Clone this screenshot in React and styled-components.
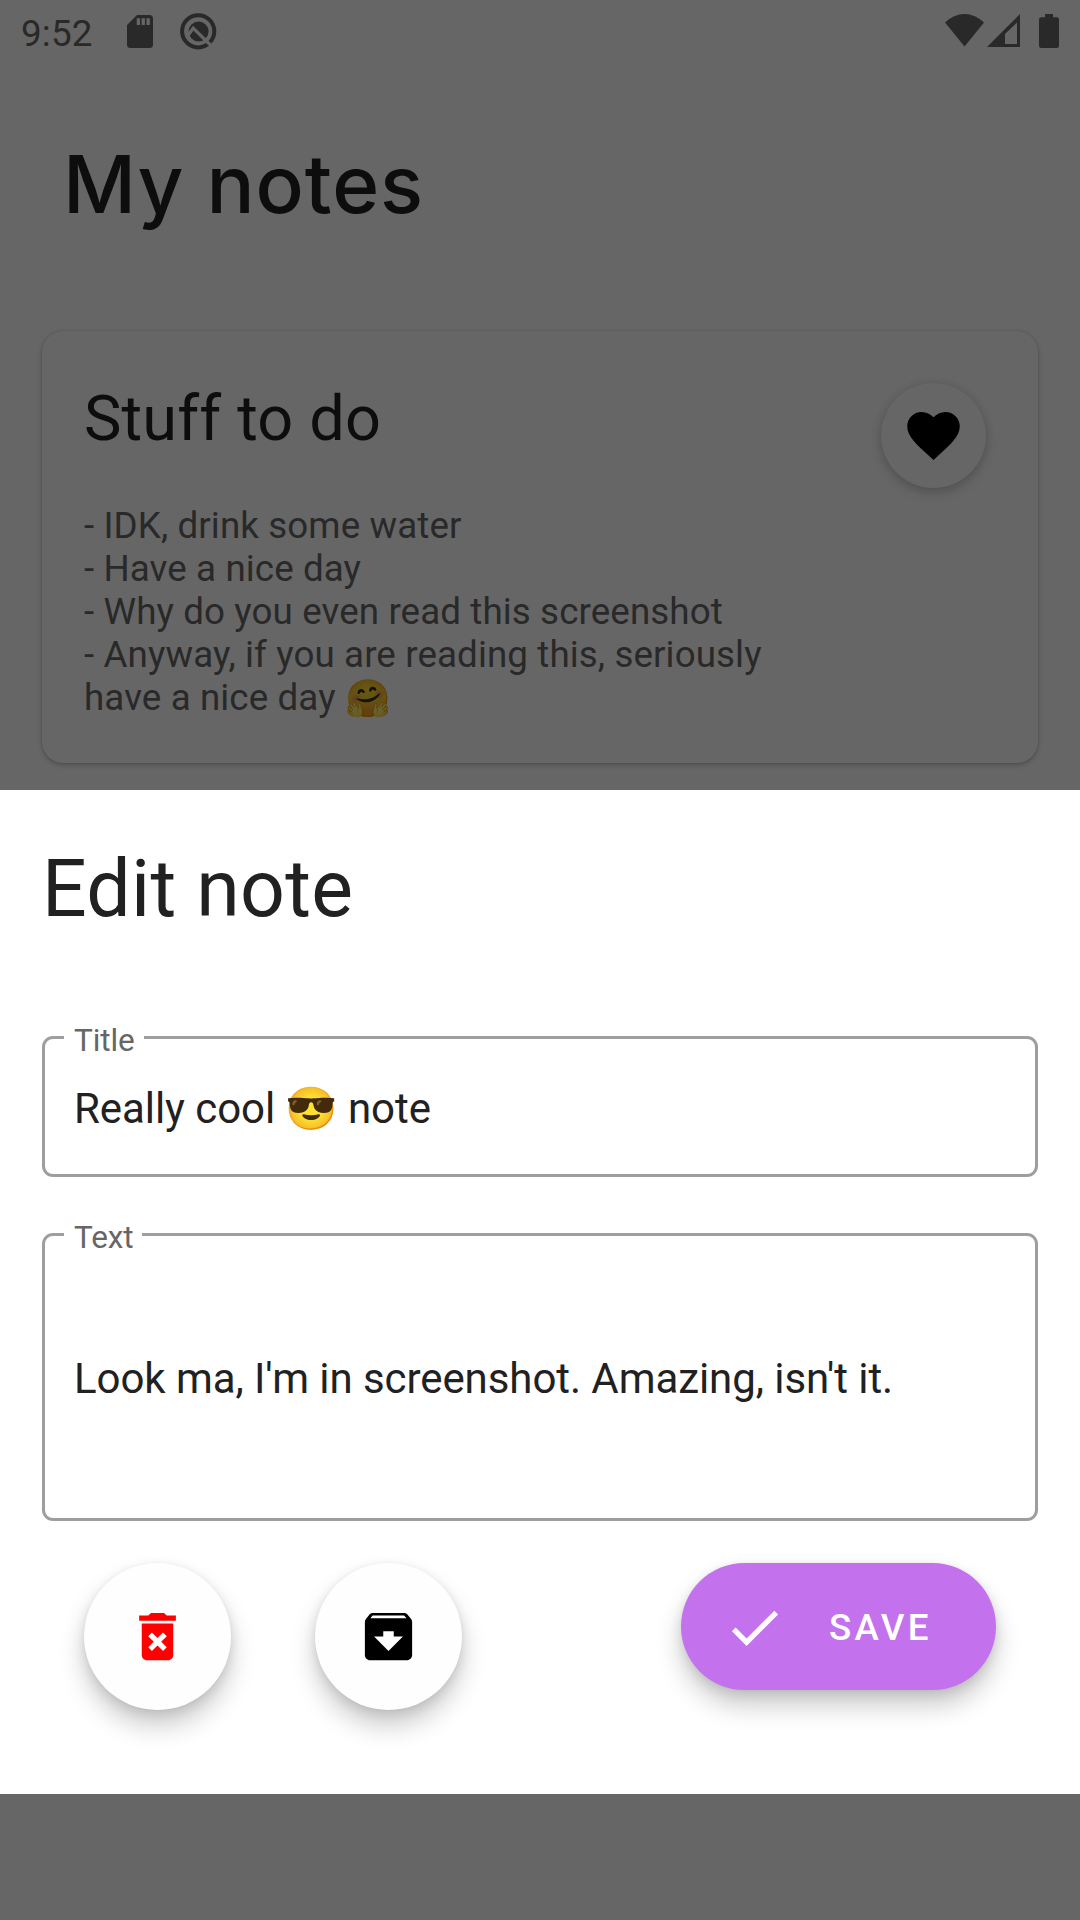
import React from "react";
import styled, { createGlobalStyle } from "styled-components";

const GlobalStyle = createGlobalStyle`
  * { box-sizing: border-box; }
  html, body { margin: 0; padding: 0; background: #666666; }
  body { font-family: Roboto, "Noto Color Emoji", sans-serif; }
`;

const Screen = styled.div`
  width: 1080px;
  height: 1920px;
  overflow: hidden;
  display: flex;
  flex-direction: column;
  background: #666666;
`;

const Backdrop = styled.div`
  height: 790px;
  flex: none;
  display: flex;
  flex-direction: column;
`;

const StatusBar = styled.header`
  height: 63px;
  padding: 0 21px 0 21px;
  display: flex;
  justify-content: space-between;
  color: #292929;
`;

const StatusGroup = styled.div`
  display: flex;
  align-items: flex-start;
`;

const Clock = styled.span`
  width: 106px;
  padding-top: 12px;
  font-size: 36.75px;
  line-height: 43px;
  letter-spacing: 0.2px;
`;

const Glyph = styled.svg`
  display: block;
  flex: none;
  width: ${(p) => p.$w}px;
  height: ${(p) => p.$h}px;
  margin: ${(p) => p.$m || "0"};
  fill: currentColor;
`;

const PageTitle = styled.h1`
  margin: 68px 0 0 63px;
  height: 200px;
  font-family: Inter, sans-serif;
  font-weight: 500;
  font-size: 80px;
  line-height: 106px;
  letter-spacing: 0.9px;
  color: #0d0d0d;
`;

const NoteCard = styled.article`
  margin: 0 42px;
  height: 432px;
  padding: 52px 52px 0 42px;
  border-radius: 21px;
  background: #666666;
  box-shadow: 0 2px 5px rgba(0, 0, 0, 0.22), 0 0 2px rgba(0, 0, 0, 0.12);
  display: flex;
  justify-content: space-between;
  align-items: flex-start;
`;

const NoteContent = styled.div`
  margin-top: -1px;
`;

const NoteTitle = styled.h2`
  margin: 0 0 48px;
  font-weight: 400;
  font-size: 63px;
  line-height: 74px;
  letter-spacing: 0.17px;
  color: #0d0d0d;
`;

const NoteLine = styled.p`
  margin: 0;
  height: 43px;
  display: flex;
  font-size: 36.75px;
  line-height: 43px;
  letter-spacing: 0.1px;
  white-space: pre;
  color: #292929;
`;

const Emoji = styled.span`
  font-family: "Noto Color Emoji", sans-serif;
  padding-top: ${(p) => (p.$dim ? 1 : 0)}px;
  filter: brightness(${(p) => (p.$dim ? 0.4 : 1)});
`;

const HeartButton = styled.button`
  width: 105px;
  height: 105px;
  padding: 0;
  border: 0;
  border-radius: 50%;
  background: #666666;
  color: #000;
  display: grid;
  place-items: center;
  box-shadow: 0 5px 12px rgba(0, 0, 0, 0.16), 0 0 8px rgba(0, 0, 0, 0.08);
`;

const Sheet = styled.section`
  height: 1004px;
  flex: none;
  padding: 53px 42px 0;
  background: #fff;
  display: flex;
  flex-direction: column;
`;

const SheetTitle = styled.h2`
  margin: 0 0 84px;
  font-weight: 400;
  font-size: 78.75px;
  line-height: 92px;
  letter-spacing: 0.27px;
  color: #212121;
`;

const Field = styled.fieldset`
  margin: 0 0 ${(p) => p.$gap}px;
  padding: 0 29px;
  height: ${(p) => p.$h}px;
  border: 3px solid #9e9e9e;
  border-radius: 11px;
  min-width: 0;
`;

const Legend = styled.legend`
  margin-left: -10px;
  padding: 0 10px;
  width: ${(p) => p.$w}px;
  height: 37px;
  font-size: 31.5px;
  line-height: 43px;
  letter-spacing: -0.1px;
  color: #666666;
`;

const FieldValue = styled.div`
  height: ${(p) => p.$top + 50}px;
  padding-top: ${(p) => p.$top}px;
  font-size: 42px;
  line-height: 50px;
  letter-spacing: -0.07px;
  color: #212121;
  white-space: pre;
  display: flex;
`;

const Actions = styled.div`
  display: flex;
  align-items: flex-start;
  padding: 0 42px;
`;

const liftShadow =
  "0 16px 26px rgba(0, 0, 0, 0.2), 0 4px 12px rgba(0, 0, 0, 0.1), 0 0 4px rgba(0, 0, 0, 0.03)";

const Fab = styled.button`
  width: 147px;
  height: 147px;
  margin-right: 84px;
  padding: 0;
  border: 0;
  border-radius: 50%;
  background: #fefefe;
  color: ${(p) => p.$color};
  display: grid;
  place-items: center;
  box-shadow: ${liftShadow};
`;

const SaveButton = styled.button`
  margin-left: auto;
  width: 315px;
  height: 127px;
  padding: 1px 0 0 42px;
  border: 0;
  border-radius: 64px;
  background: #c371ed;
  color: #fff;
  display: flex;
  align-items: center;
  gap: 43px;
  font: 500 36.75px/43px Roboto, sans-serif;
  letter-spacing: 3.28px;
  box-shadow: ${liftShadow};
`;

function Icon({ d }) {
  return (
    <Glyph $w={63} $h={63} viewBox="0 0 24 24">
      <path d={d} />
    </Glyph>
  );
}

const HEART =
  "M12 21.35l-1.45-1.32C5.4 15.36 2 12.28 2 8.5 2 5.42 4.42 3 7.5 3c1.74 0 3.41.81 4.5 2.09C13.09 3.81 14.76 3 16.5 3 19.58 3 22 5.42 22 8.5c0 3.78-3.4 6.86-8.55 11.54L12 21.35z";
const DELETE =
  "M6 19c0 1.1.9 2 2 2h8c1.1 0 2-.9 2-2V7H6v12zm2.46-7.12l1.41-1.41L12 12.59l2.12-2.12 1.41 1.41L13.41 14l2.12 2.12-1.41 1.41L12 15.41l-2.12 2.12-1.41-1.41L10.59 14l-2.13-2.12zM15.5 4l-1-1h-5l-1 1H5v2h14V4z";
const ARCHIVE =
  "M20.54 5.23l-1.39-1.68C18.88 3.21 18.47 3 18 3H6c-.47 0-.88.21-1.16.55L3.46 5.23C3.17 5.57 3 6.02 3 6.5V19c0 1.1.9 2 2 2h14c1.1 0 2-.9 2-2V6.5c0-.48-.17-.93-.46-1.27zM12 17.5L6.5 12H10v-2h4v2h3.5L12 17.5zM5.12 5l.81-1h12l.94 1H5.12z";
const CHECK = "M9 16.17L4.83 12l-1.42 1.41L9 19 21 7l-1.41-1.41z";

const NOTE_LINES = [
  "- IDK, drink some water",
  "- Have a nice day",
  "- Why do you even read this screenshot",
  "- Anyway, if you are reading this, seriously",
];

export default function App() {
  return (
    <Screen>
      <GlobalStyle />
      <Backdrop>
        <StatusBar>
          <StatusGroup>
            <Clock>9:52</Clock>
            <Glyph $w={26} $h={33} $m="15px 0 0" viewBox="0 0 26 33">
              <path
                fillRule="evenodd"
                d="M10 0H22.500Q26 0 26 3.500V29.500Q26 33 22.500 33H3.500Q0 33 0 29.500V10ZM9.700 3.300V10H13V3.300ZM14.600 3.300V10H17.900V3.300ZM19.500 3.300V10H22.800V3.300Z"
              />
            </Glyph>
            <Glyph $w={37} $h={37} $m="13px 0 0 27px" viewBox="0 0 37 37">
              <circle
                cx="18.200"
                cy="18.300"
                r="16.100"
                fill="none"
                stroke="currentColor"
                strokeWidth="4"
              />
              <circle cx="18.600" cy="18.500" r="10" />
              <path
                d="M7 23.500L13.200 15.200L33 34.500"
                fill="none"
                stroke="#666666"
                strokeWidth="3.200"
              />
            </Glyph>
          </StatusGroup>
          <StatusGroup>
            <Glyph $w={39} $h={33} $m="14px 0 0" viewBox="0 0 39 33">
              <path d="M0 8.500Q9 0 19.500 0T39 8.500L19.500 32.500Z" />
            </Glyph>
            <Glyph $w={33} $h={33} $m="14px 0 0 3px" viewBox="0 0 33 33">
              <path fillRule="evenodd" d="M33 0V33H0ZM30 8.500L18 20V30H30Z" />
            </Glyph>
            <Glyph $w={20} $h={34} $m="14px 0 0 19px" viewBox="0 0 20 34">
              <path d="M6 0H14V3.300H17.800Q20 3.300 20 5.500V31.500Q20 34 17.800 34H2.200Q0 34 0 31.500V5.500Q0 3.300 2.200 3.300H6Z" />
            </Glyph>
          </StatusGroup>
        </StatusBar>
        <PageTitle>My notes</PageTitle>
        <NoteCard>
          <NoteContent>
            <NoteTitle>Stuff to do</NoteTitle>
            {NOTE_LINES.map((line) => (
              <NoteLine key={line}>{line}</NoteLine>
            ))}
            <NoteLine>
              <span>{"have a nice day "}</span>
              <Emoji $dim>🤗</Emoji>
            </NoteLine>
          </NoteContent>
          <HeartButton aria-label="Favourite">
            <Icon d={HEART} />
          </HeartButton>
        </NoteCard>
      </Backdrop>
      <Sheet>
        <SheetTitle>Edit note</SheetTitle>
        <Field $h={158} $gap={39}>
          <Legend $w={80}>Title</Legend>
          <FieldValue $top={28}>
            <span>{"Really cool "}</span>
            <Emoji>😎</Emoji>
            <span>{" note"}</span>
          </FieldValue>
        </Field>
        <Field $h={305} $gap={42}>
          <Legend $w={78}>Text</Legend>
          <FieldValue $top={101}>Look ma, I'm in screenshot. Amazing, isn't it.</FieldValue>
        </Field>
        <Actions>
          <Fab $color="#ff0000" aria-label="Delete">
            <Icon d={DELETE} />
          </Fab>
          <Fab $color="#000" aria-label="Archive">
            <Icon d={ARCHIVE} />
          </Fab>
          <SaveButton>
            <Icon d={CHECK} />
            SAVE
          </SaveButton>
        </Actions>
      </Sheet>
    </Screen>
  );
}
